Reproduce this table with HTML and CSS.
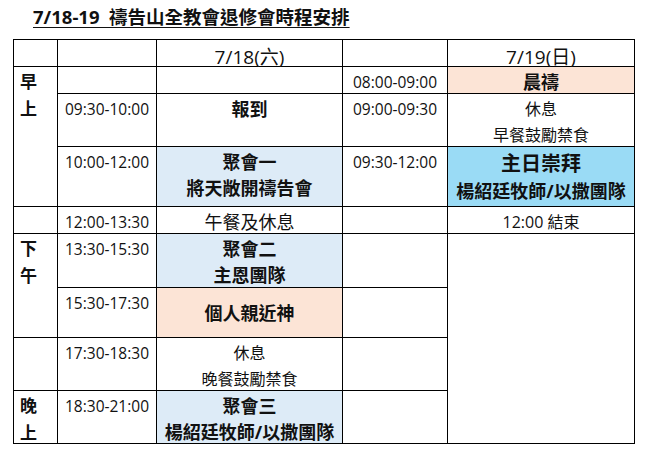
FILE: index.html
```html
<!DOCTYPE html>
<html lang="zh-Hant">
<head>
<meta charset="utf-8">
<title>禱告山全教會退修會時程安排</title>
<link rel="stylesheet" href="styles.css">
</head>
<body>
<div class="page">
  <h1 class="title"><span class="title-text">7/18-19&nbsp;&nbsp;禱告山全教會退修會時程安排</span></h1>
  <div class="schedule">
    <!-- header -->
    <div class="cell"></div>
    <div class="cell"></div>
    <div class="cell date">7/18(六)</div>
    <div class="cell"></div>
    <div class="cell date">7/19(日)</div>

    <!-- row 1 -->
    <div class="cell period span-3">早<br>上</div>
    <div class="cell"></div>
    <div class="cell"></div>
    <div class="cell time">08:00-09:00</div>
    <div class="cell peach strong">晨禱</div>

    <!-- row 2 -->
    <div class="cell time">09:30-10:00</div>
    <div class="cell strong">報到</div>
    <div class="cell time">09:00-09:30</div>
    <div class="cell note">休息<br>早餐鼓勵禁食</div>

    <!-- row 3 -->
    <div class="cell time">10:00-12:00</div>
    <div class="cell blue strong">聚會一<br>將天敞開禱告會</div>
    <div class="cell time">09:30-12:00</div>
    <div class="cell cyan strong worship"><span class="big">主日崇拜</span><br>楊紹廷牧師/以撒團隊</div>

    <!-- row 4 -->
    <div class="cell"></div>
    <div class="cell time">12:00-13:30</div>
    <div class="cell lunch">午餐及休息</div>
    <div class="cell"></div>
    <div class="cell end">12:00 結束</div>

    <!-- row 5 -->
    <div class="cell period span-2">下<br>午</div>
    <div class="cell time">13:30-15:30</div>
    <div class="cell blue strong">聚會二<br>主恩團隊</div>
    <div class="cell"></div>
    <div class="cell span-4"></div>

    <!-- row 6 -->
    <div class="cell time">15:30-17:30</div>
    <div class="cell peach strong middle">個人親近神</div>
    <div class="cell"></div>

    <!-- row 7 -->
    <div class="cell"></div>
    <div class="cell time">17:30-18:30</div>
    <div class="cell note">休息<br>晚餐鼓勵禁食</div>
    <div class="cell"></div>

    <!-- row 8 -->
    <div class="cell period">晚<br>上</div>
    <div class="cell time">18:30-21:00</div>
    <div class="cell blue strong">聚會三<br>楊紹廷牧師/以撒團隊</div>
    <div class="cell"></div>
  </div>
</div>
</body>
</html>
```

FILE: styles.css
```css
html, body {
  margin: 0;
  padding: 0;
  background: #ffffff;
}

body {
  font-family: "Open Sans", "Noto Sans CJK TC", sans-serif;
  color: #111111;
}

.page {
  padding-left: 13px;
}

.title {
  margin: 0 0 0 20px;
  height: 39px;
  box-sizing: border-box;
  padding-top: 5px;
  font-size: 18.5px;
  line-height: 24px;
  font-weight: 700;
}

.title-text {
  text-decoration: underline;
  text-decoration-thickness: 1px;
  text-underline-offset: 3px;
}

.schedule {
  display: grid;
  width: 622px;
  box-sizing: border-box;
  padding: 1px;
  gap: 1px;
  background: #000000;
  grid-template-columns: 43px 98px 185px 104px 186px;
  grid-template-rows: 26px 26px 52px 59px 26px 53px 49px 52px 52px;
}

.cell {
  background: #ffffff;
  box-sizing: border-box;
  padding-top: 2px;
  text-align: center;
  font-size: 16px;
  line-height: 26px;
  white-space: nowrap;
  overflow: visible;
}

.span-2 { grid-row: span 2; }
.span-3 { grid-row: span 3; }
.span-4 { grid-row: span 4; }

.date {
  font-size: 19px;
  padding-top: 4px;
}

.time {
  font-size: 15.5px;
}

.period {
  text-align: left;
  padding-left: 6px;
  padding-top: 1px;
  font-weight: 700;
  font-size: 17px;
  line-height: 27px;
}

.strong {
  font-weight: 700;
  font-size: 18px;
}

.note {
  font-size: 16px;
}

.lunch {
  font-size: 18px;
}

.end {
  font-size: 16px;
}

.middle {
  display: flex;
  align-items: center;
  justify-content: center;
  padding-top: 0;
}

.big {
  font-size: 20px;
  line-height: 29px;
}

.blue { background: #DDEBF7; }
.peach { background: #FCE4D6; }
.cyan { background: #9ADBF5; }
```
